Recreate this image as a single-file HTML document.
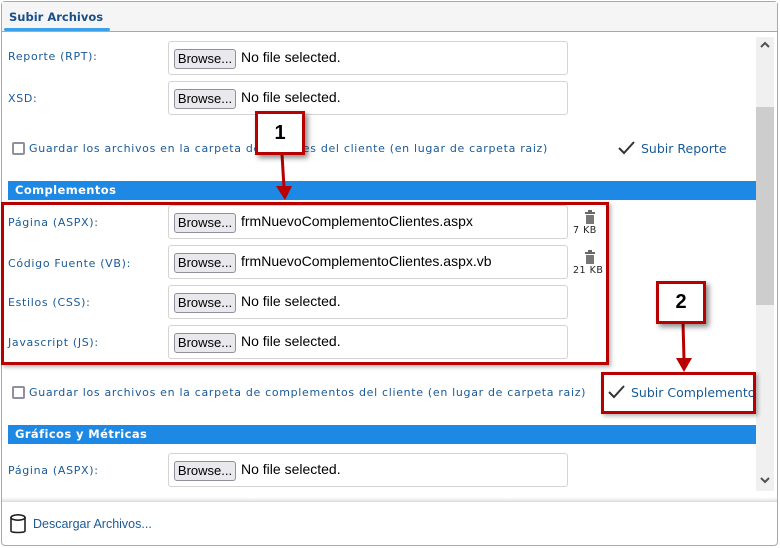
<!DOCTYPE html>
<html><head><meta charset="utf-8"><style>
*{margin:0;padding:0;box-sizing:border-box}
body{width:780px;height:548px;background:#fff;position:relative;overflow:hidden;font-family:"DejaVu Sans","Liberation Sans",sans-serif}
.a{position:absolute;white-space:nowrap}
.lbl{font-size:11px;color:#1a5a96;letter-spacing:0.68px}
.inp{position:absolute;left:168px;width:400px;height:34px;border:1px solid #d4d4d4;border-radius:3px;background:#fff}
.btn{position:absolute;left:5px;top:7px;width:62px;height:20px;border:1px solid #8f8f9d;border-radius:3px;background:#e9e9ed;font:13px "Liberation Sans",sans-serif;color:#000;text-align:center;line-height:18px}
.ft{position:absolute;left:72px;top:6px;font:14px "Liberation Sans",sans-serif;color:#000;line-height:18px;white-space:nowrap}
.bar{position:absolute;left:8px;width:748px;height:19px;background:#1e88e5;color:#fff;font-weight:bold;font-size:11.5px;padding-left:7px;line-height:19px;letter-spacing:0.4px}
.cb{position:absolute;width:13px;height:13px;border:2px solid #8f8f9d;border-radius:2px;background:#fff}
.red{position:absolute;border:3px solid #b80000}
.call{position:absolute;background:#fff;border:3px solid #b80000;box-shadow:3px 3px 5px rgba(0,0,0,.45);font:bold 20px "Liberation Sans",sans-serif;text-align:center;color:#000}
.kb{font-size:9.5px;color:#222;letter-spacing:0.5px}
</style></head><body>
<div class="a" style="left:1px;top:1px;width:777px;height:545px;border:1px solid #a9a9a9;border-radius:4px"></div>
<div class="a" style="left:2px;top:2px;width:775px;height:30px;background:#f5f5f5;border-bottom:1px solid #a9a9a9"></div>
<div class="a" style="left:9px;top:10px;font-size:11.5px;font-weight:bold;color:#1a4f8a">Subir Archivos</div>
<div class="a" style="left:4px;top:28px;width:106px;height:3px;background:#3aa0e8;border-radius:2px"></div>

<div class="a" style="left:756px;top:37px;width:18px;height:454px;background:#f0f0f0"></div>
<div class="a" style="left:756px;top:107px;width:18px;height:198px;background:#cdcdcd"></div>
<svg class="a" style="left:759px;top:40px" width="12" height="10"><path d="M2 7L6 3L10 7" stroke="#505050" stroke-width="2" fill="none"/></svg>
<svg class="a" style="left:759px;top:475px" width="12" height="10"><path d="M2 3L6 7L10 3" stroke="#505050" stroke-width="2" fill="none"/></svg>

<div class="a lbl" style="left:8px;top:50px">Reporte (RPT):</div>
<div class="inp" style="top:41px"><div class="btn">Browse...</div><div class="ft">No file selected.</div></div>
<div class="a lbl" style="left:8px;top:92px">XSD:</div>
<div class="inp" style="top:81px"><div class="btn">Browse...</div><div class="ft">No file selected.</div></div>

<div class="cb" style="left:12px;top:142px"></div>
<div class="a lbl" style="left:29px;top:142px">Guardar los archivos en la carpeta de reportes del cliente (en lugar de carpeta raiz)</div>
<svg class="a" style="left:617px;top:140px" width="20" height="16"><path d="M2 8L7 13L17 2" stroke="#333" stroke-width="2" fill="none"/></svg>
<div class="a" style="left:641px;top:141px;font-size:12.5px;color:#1a5a96">Subir Reporte</div>

<div class="bar" style="top:181px">Complementos</div>

<div class="a lbl" style="left:8px;top:216px">Página (ASPX):</div>
<div class="inp" style="top:205px"><div class="btn">Browse...</div><div class="ft">frmNuevoComplementoClientes.aspx</div></div>
<div class="a lbl" style="left:8px;top:257px">Código Fuente (VB):</div>
<div class="inp" style="top:245px"><div class="btn">Browse...</div><div class="ft">frmNuevoComplementoClientes.aspx.vb</div></div>
<div class="a lbl" style="left:8px;top:296px">Estilos (CSS):</div>
<div class="inp" style="top:285px"><div class="btn">Browse...</div><div class="ft">No file selected.</div></div>
<div class="a lbl" style="left:8px;top:336px">Javascript (JS):</div>
<div class="inp" style="top:325px"><div class="btn">Browse...</div><div class="ft">No file selected.</div></div>

<svg class="a" style="left:584px;top:210px" width="12" height="14"><rect x="1" y="2" width="10" height="2" fill="#666"/><rect x="4" y="0" width="4" height="2" fill="#666"/><rect x="2" y="5" width="8" height="9" fill="#777"/></svg>
<div class="a kb" style="left:573px;top:225px">7 KB</div>
<svg class="a" style="left:584px;top:250px" width="12" height="14"><rect x="1" y="2" width="10" height="2" fill="#666"/><rect x="4" y="0" width="4" height="2" fill="#666"/><rect x="2" y="5" width="8" height="9" fill="#777"/></svg>
<div class="a kb" style="left:573px;top:265px">21 KB</div>

<div class="cb" style="left:12px;top:386px"></div>
<div class="a lbl" style="left:29px;top:386px">Guardar los archivos en la carpeta de complementos del cliente (en lugar de carpeta raiz)</div>
<svg class="a" style="left:607px;top:384px" width="20" height="16"><path d="M2 8L7 13L17 2" stroke="#333" stroke-width="2" fill="none"/></svg>
<div class="a" style="left:631px;top:385px;font-size:12.5px;color:#1a5a96">Subir Complemento</div>

<div class="bar" style="top:425px">Gráficos y Métricas</div>
<div class="a lbl" style="left:8px;top:464px">Página (ASPX):</div>
<div class="inp" style="top:453px"><div class="btn">Browse...</div><div class="ft">No file selected.</div></div>

<div class="a" style="left:2px;top:497px;width:775px;height:4px;background:linear-gradient(#fff,#e6e6e6)"></div>
<div class="a" style="left:2px;top:501px;width:775px;height:1px;background:#ddd"></div>
<svg class="a" style="left:9px;top:513px" width="18" height="22"><path d="M2 4V18C2 20 16 20 16 18V4" stroke="#222" stroke-width="1.6" fill="none"/><ellipse cx="9" cy="4.5" rx="7" ry="2.7" stroke="#222" stroke-width="1.6" fill="none"/></svg>
<div class="a" style="left:33px;top:517px;font:12.5px 'Liberation Sans',sans-serif;color:#1a5a96">Descargar Archivos...</div>

<div class="red" style="left:1px;top:202px;width:608px;height:163px;box-shadow:2px 2px 4px rgba(0,0,0,.3)"></div>
<div class="red" style="left:601px;top:372px;width:155px;height:42px;box-shadow:2px 2px 4px rgba(0,0,0,.3)"></div>
<svg class="a" style="left:270px;top:150px" width="30" height="55"><path d="M12 4L14 38" stroke="#b80000" stroke-width="3"/><path d="M6 36L22 36L15 50Z" fill="#b80000"/></svg>
<svg class="a" style="left:670px;top:318px" width="30" height="58"><path d="M13 4L14 42" stroke="#b80000" stroke-width="3"/><path d="M6 40L22 40L14 54Z" fill="#b80000"/></svg>
<div class="call" style="left:255px;top:111px;width:50px;height:44px;line-height:38px">1</div>
<div class="call" style="left:656px;top:281px;width:50px;height:43px;line-height:37px">2</div>
</body></html>
